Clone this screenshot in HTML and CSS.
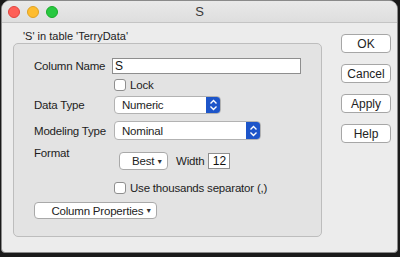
FILE: index.html
```html
<!DOCTYPE html>
<html lang="en">
<head>
  <meta charset="UTF-8" />
  <meta name="viewport" content="width=device-width, initial-scale=1" />
  <title>S</title>
  <link rel="stylesheet" href="styles.css">
</head>
<body>

  <div class="window">
    <header class="titlebar">
      <div class="lights">
        <span class="light red"></span>
        <span class="light yellow"></span>
        <span class="light green"></span>
      </div>
      <span class="title">S</span>
    </header>

    <div class="content">
      <div class="main">
        <div class="caption">'S' in table 'TerryData'</div>

        <div class="group">
          <div class="row row-name">
            <span class="label">Column Name</span>
            <input class="text-input name-input" type="text" value="S" />
          </div>

          <div class="row indent row-lock">
            <label class="check"><span class="box"></span>Lock</label>
          </div>

          <div class="row row-popup">
            <span class="label">Data Type</span>
            <div class="popup popup-data">
              <span class="popup-text">Numeric</span>
              <span class="popup-arrow">
                <svg width="9" height="12" viewBox="0 0 9 12"><path d="M1.5 4.5 L4.5 1.5 L7.5 4.5 M1.5 7.5 L4.5 10.5 L7.5 7.5" fill="none" stroke="#fff" stroke-width="1.4"/></svg>
              </span>
            </div>
          </div>

          <div class="row row-popup row-model">
            <span class="label">Modeling Type</span>
            <div class="popup popup-model">
              <span class="popup-text">Nominal</span>
              <span class="popup-arrow">
                <svg width="9" height="12" viewBox="0 0 9 12"><path d="M1.5 4.5 L4.5 1.5 L7.5 4.5 M1.5 7.5 L4.5 10.5 L7.5 7.5" fill="none" stroke="#fff" stroke-width="1.4"/></svg>
              </span>
            </div>
          </div>

          <div class="row row-format">
            <span class="label">Format</span>
            <div class="format-controls">
              <button class="menu-btn best-btn">Best<span class="tri">▼</span></button>
              <span class="width-label">Width</span>
              <input class="text-input width-input" type="text" value="12" />
            </div>
          </div>

          <div class="row indent row-sep">
            <label class="check"><span class="box"></span>Use thousands separator (,)</label>
          </div>

          <div class="row row-props">
            <button class="menu-btn props-btn">Column Properties<span class="tri">▼</span></button>
          </div>
        </div>
      </div>

      <div class="side">
        <button class="push">OK</button>
        <button class="push">Cancel</button>
        <button class="push">Apply</button>
        <button class="push">Help</button>
      </div>
    </div>
  </div>

</body>
</html>
```

FILE: styles.css
```css
* {
  box-sizing: border-box;
}
body {
  margin: 0;
  background: #1a1a1a;
  font-family: 'Liberation Sans', Arial, sans-serif;
  font-size: 12px;
  color: #1d1d1d;
  width: 400px;
  height: 257px;
  overflow: hidden;
}

.window {
  width: 397px;
  height: 253px;
  background: #ececec;
  border: 1px solid #8a8a8a;
  border-radius: 9px 9px 4px 4px;
  margin-left: 1px;
  overflow: hidden;
}

/* title bar */
.titlebar {
  height: 22px;
  background: linear-gradient(#e9e9e9, #dedede);
  border-bottom: 1px solid #c4c4c4;
  display: flex;
  align-items: center;
  position: relative;
}
.lights {
  display: flex;
  gap: 7px;
  padding-left: 6px;
}
.light {
  width: 12px;
  height: 12px;
  border-radius: 50%;
}
.red { background: #fe5f57; border: 1px solid #e0443e; }
.yellow { background: #febc2e; border: 1px solid #dea123; }
.green { background: #28c840; border: 1px solid #1aab29; }
.title {
  position: absolute;
  left: 0;
  right: 0;
  text-align: center;
  font-size: 13px;
  color: #3a3a3a;
}

.content {
  display: flex;
  padding: 7px 0 0 11px;
}
.main {
  width: 309px;
}
.caption {
  font-size: 11px;
  line-height: 13px;
  padding-left: 10px;
  color: #222;
}

/* group box */
.group {
  height: 194px;
  background: #e3e3e3;
  border: 1px solid #bdbdbd;
  border-radius: 5px;
  padding: 14px 0 0 20px;
  display: flex;
  flex-direction: column;
  font-size: 11.5px;
  letter-spacing: -0.2px;
}
.row {
  display: flex;
  align-items: center;
  white-space: nowrap;
}
.label {
  width: 78px;
  flex-shrink: 0;
}
.indent {
  padding-left: 80px;
}
.row-lock { margin-top: 5px; }
.row-popup { margin-top: 5px; }
.row-model { margin-top: 7px; }
.row-format {
  align-items: flex-start;
  margin-top: 7px;
}
.row-sep { margin-top: 12px; }
.row-props { margin-top: 8px; }

.text-input {
  font-family: inherit;
  font-size: 12px;
  height: 16px;
  border: 1px solid #8e8e8e;
  background: #fff;
  padding: 0 2px;
  color: #111;
  outline: none;
}
.name-input {
  width: 189px;
}

.check {
  display: flex;
  align-items: center;
  gap: 4px;
  height: 12px;
}
.box {
  width: 12px;
  height: 12px;
  border: 1px solid #8f8f8f;
  border-radius: 3px;
  background: #fff;
}

.popup {
  margin-left: 2px;
  height: 18px;
  background: #fff;
  border: 1px solid #b2b2b2;
  border-radius: 4px;
  display: flex;
  align-items: center;
  justify-content: space-between;
  overflow: hidden;
}
.row-model .popup { height: 19px; }
.popup-data { width: 107px; }
.popup-model { width: 147px; }
.popup-text {
  padding-left: 7px;
}
.popup-arrow {
  width: 15px;
  height: 19px;
  margin-right: -1px;
  background: #1d55c9;
  border-radius: 0 4px 4px 0;
  display: flex;
  align-items: center;
  justify-content: center;
}

.format-controls {
  display: flex;
  align-items: center;
  margin-top: 5px;
  padding-left: 7px;
}
.menu-btn {
  font-family: inherit;
  font-size: 11.5px;
  letter-spacing: -0.2px;
  color: #222;
  background: #fff;
  border: 1px solid #a9a9a9;
  border-radius: 4px;
  height: 18px;
  padding: 0 4px 0 0;
  display: flex;
  align-items: center;
  justify-content: flex-end;
}
.tri {
  font-size: 7px;
  margin-left: 2px;
  color: #333;
}
.best-btn {
  width: 49px;
}
.width-label {
  margin-left: 8px;
}
.width-input {
  width: 22px;
  margin-left: 4px;
  text-align: center;
}
.props-btn {
  width: 123px;
  height: 17px;
}

/* side buttons */
.side {
  display: flex;
  flex-direction: column;
  gap: 11px;
  padding: 4px 0 0 19px;
}
.push {
  font-family: inherit;
  font-size: 12px;
  color: #222;
  width: 50px;
  height: 19px;
  background: #fff;
  border: 1px solid #a6a6a6;
  border-radius: 4px;
  padding: 0;
}
```
